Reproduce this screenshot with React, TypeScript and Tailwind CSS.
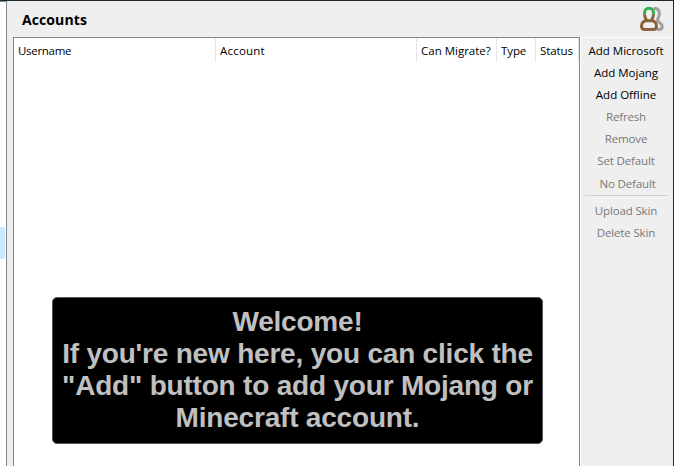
const columns = [
  { label: 'Username', cell: 'w-[202px]', text: 'tracking-[-0.3px]' },
  { label: 'Account', cell: 'w-[201px]', text: 'tracking-[0.2px]' },
  { label: 'Can Migrate?', cell: 'w-[80px]', text: 'tracking-normal' },
  { label: 'Type', cell: 'w-[39px]', text: 'tracking-[-0.1px]' },
  { label: 'Status', cell: 'w-[43px]', text: 'tracking-[-0.1px]' },
];

const addActions = ['Add Microsoft', 'Add Mojang', 'Add Offline'];
const accountActions = ['Refresh', 'Remove', 'Set Default'];
const skinActions = ['Upload Skin', 'Delete Skin'];

function AccountsIcon() {
  return (
    <svg width="26" height="26" viewBox="0 0 26 26" fill="none" strokeWidth="3">
      <path
        d="M15 2.300C18.700 2.300 20.400 4.800 20.400 8c0 2.800-1.900 4.400-1.900 6 0 2.200 4.800 3 4.800 6.600 0 1.900-1.200 2.900-3.300 2.900h-2"
        stroke="#9f9f9f"
      />
      <path
        d="M5.500 7.500c0 3 .6 5 2.300 7-3.400.5-5.300 2.800-5.300 5.700 0 2.200 1.300 3.300 3.400 3.300h8.200c2.100 0 3.400-1.100 3.400-3.300 0-2.900-1.900-5.200-5.300-5.700 1.700-2 2.300-4 2.300-7z"
        fill="#efefef"
      />
      <path
        d="M5.500 7.500c0 3 .6 5 2.300 7-3.400.5-5.300 2.800-5.300 5.700 0 2.200 1.300 3.300 3.400 3.300h8.200c2.100 0 3.400-1.100 3.400-3.300 0-2.900-1.900-5.200-5.300-5.700 1.700-2 2.300-4 2.300-7M7.800 14.700h4.400"
        stroke="#8c623b"
      />
      <path d="M5.500 8.300V7.200c0-3 1.500-4.900 4.500-4.900s4.500 1.900 4.500 4.900v1.100" fill="#efefef" stroke="#35b34a" />
    </svg>
  );
}

function Action({ label, disabled = false }: { label: string; disabled?: boolean }) {
  return (
    <button
      disabled={disabled}
      className="h-[22px] w-full whitespace-nowrap text-center leading-[22px] text-black disabled:tracking-[-0.15px] disabled:text-[#787878]"
    >
      {label}
    </button>
  );
}

export default function App() {
  return (
    <div className="flex h-[466px] w-[674px] overflow-hidden border-t border-r border-[#1b282c] bg-[#efefef] font-['Open_Sans','Noto_Sans',sans-serif] text-[11.5px] text-black">
      <div className="w-[7px] shrink-0 border-t border-r border-[#828790] bg-white pt-[225px]">
        <div className="h-8 w-[5px] rounded-r-[2px] bg-[#cce8ff]" />
      </div>

      <main className="ml-[6px] flex min-w-0 flex-1 flex-col">
        <header className="flex h-9 shrink-0 items-start justify-between">
          <h1 className="pt-[9px] pl-[9px] text-[14px] leading-5 font-bold tracking-[0.1px]">Accounts</h1>
          <div className="pt-[5px] pr-[8px]">
            <AccountsIcon />
          </div>
        </header>

        <div className="flex min-h-0 flex-1">
          <section className="flex w-[567px] shrink-0 flex-col border-x border-t border-[#828790] bg-white">
            <div className="flex h-6">
              {columns.map((column) => (
                <div
                  key={column.label}
                  className={`${column.cell} shrink-0 border-r border-[#e5e5e5] pl-1 leading-[26px] whitespace-nowrap`}
                >
                  <span className={column.text}>{column.label}</span>
                </div>
              ))}
            </div>
            <div className="mt-[235px] ml-[38px] h-[147px] w-[491px] rounded-[5px] border border-[#555] bg-black pt-[8px] text-center font-['Liberation_Sans',Arial,sans-serif] text-[28px] leading-8 font-bold tracking-[-0.2px] whitespace-nowrap text-[#c0c0c0]">
              <p>Welcome!</p>
              <p>If you're new here, you can click the</p>
              <p>"Add" button to add your Mojang or</p>
              <p>Minecraft account.</p>
            </div>
          </section>

          <aside className="flex flex-1 flex-col border-t border-l border-white pt-[2px]">
            <div className="pr-[2px]">
              {addActions.map((label) => (
                <Action key={label} label={label} />
              ))}
              {accountActions.map((label) => (
                <Action key={label} label={label} disabled />
              ))}
            </div>
            <div className="pt-px pl-px">
              <Action label="No Default" disabled />
            </div>
            <hr className="mr-[5px] mb-1 ml-1 border-t border-[#d0d0d0]" />
            <div className="pr-[2px]">
              {skinActions.map((label) => (
                <Action key={label} label={label} disabled />
              ))}
            </div>
          </aside>
        </div>
      </main>
    </div>
  );
}
